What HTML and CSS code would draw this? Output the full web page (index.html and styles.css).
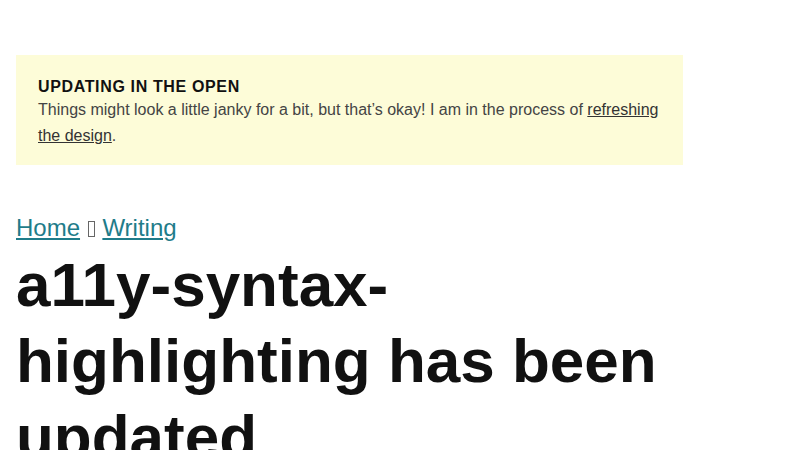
FILE: index.html
```html
<!DOCTYPE html>
<html lang="en">
<head>
    <meta charset="UTF-8">
    <meta name="viewport" content="width=device-width, initial-scale=1.0">
    <title>a11y-syntax-highlighting has been updated</title>
    <link rel="stylesheet" href="styles.css">
</head>
<body>
    <div class="page">
        <aside class="notice">
            <h2 class="notice-title">Updating in the open</h2>
            <p class="notice-text">Things might look a little janky for a bit, but that’s okay! I am in the process of <a href="#">refreshing the design</a>.</p>
        </aside>
        <nav class="crumbs">
            <a href="#">Home</a>
            <span class="crumb-sep" aria-hidden="true"></span>
            <a href="#">Writing</a>
        </nav>
        <h1 class="post-title">a11y-syntax-highlighting has been updated</h1>
    </div>
</body>
</html>
```
FILE: styles.css
```css
body {
    margin: 0;
    background: #fff;
    color: #111;
    font-family: "Liberation Sans", Arial, sans-serif;
}
.page {
    max-width: 667px;
    padding: 55px 16px 0 16px;
}
.notice {
    background: #fdfcd8;
    padding: 22px 22px 16px 22px;
}
.notice-title {
    margin: 0;
    font-size: 16px;
    font-weight: bold;
    text-transform: uppercase;
    letter-spacing: 0.04em;
    line-height: 20px;
    color: #111;
}
.notice-text {
    margin: 0;
    font-size: 16px;
    line-height: 26px;
    color: #444;
}
.notice-text a {
    color: #333;
}
.crumbs {
    margin-top: 48px;
    font-size: 24px;
    line-height: 30px;
    color: #555;
}
.crumbs a {
    color: #1f7c8a;
}
.crumb-sep {
    display: inline-block;
    width: 5px;
    height: 14px;
    margin: 0 1px;
    border: 1px solid #666;
    vertical-align: -1px;
}
.post-title {
    margin: 4px 0 0 0;
    font-size: 62px;
    line-height: 76px;
    font-weight: bold;
    color: #111;
}
```
